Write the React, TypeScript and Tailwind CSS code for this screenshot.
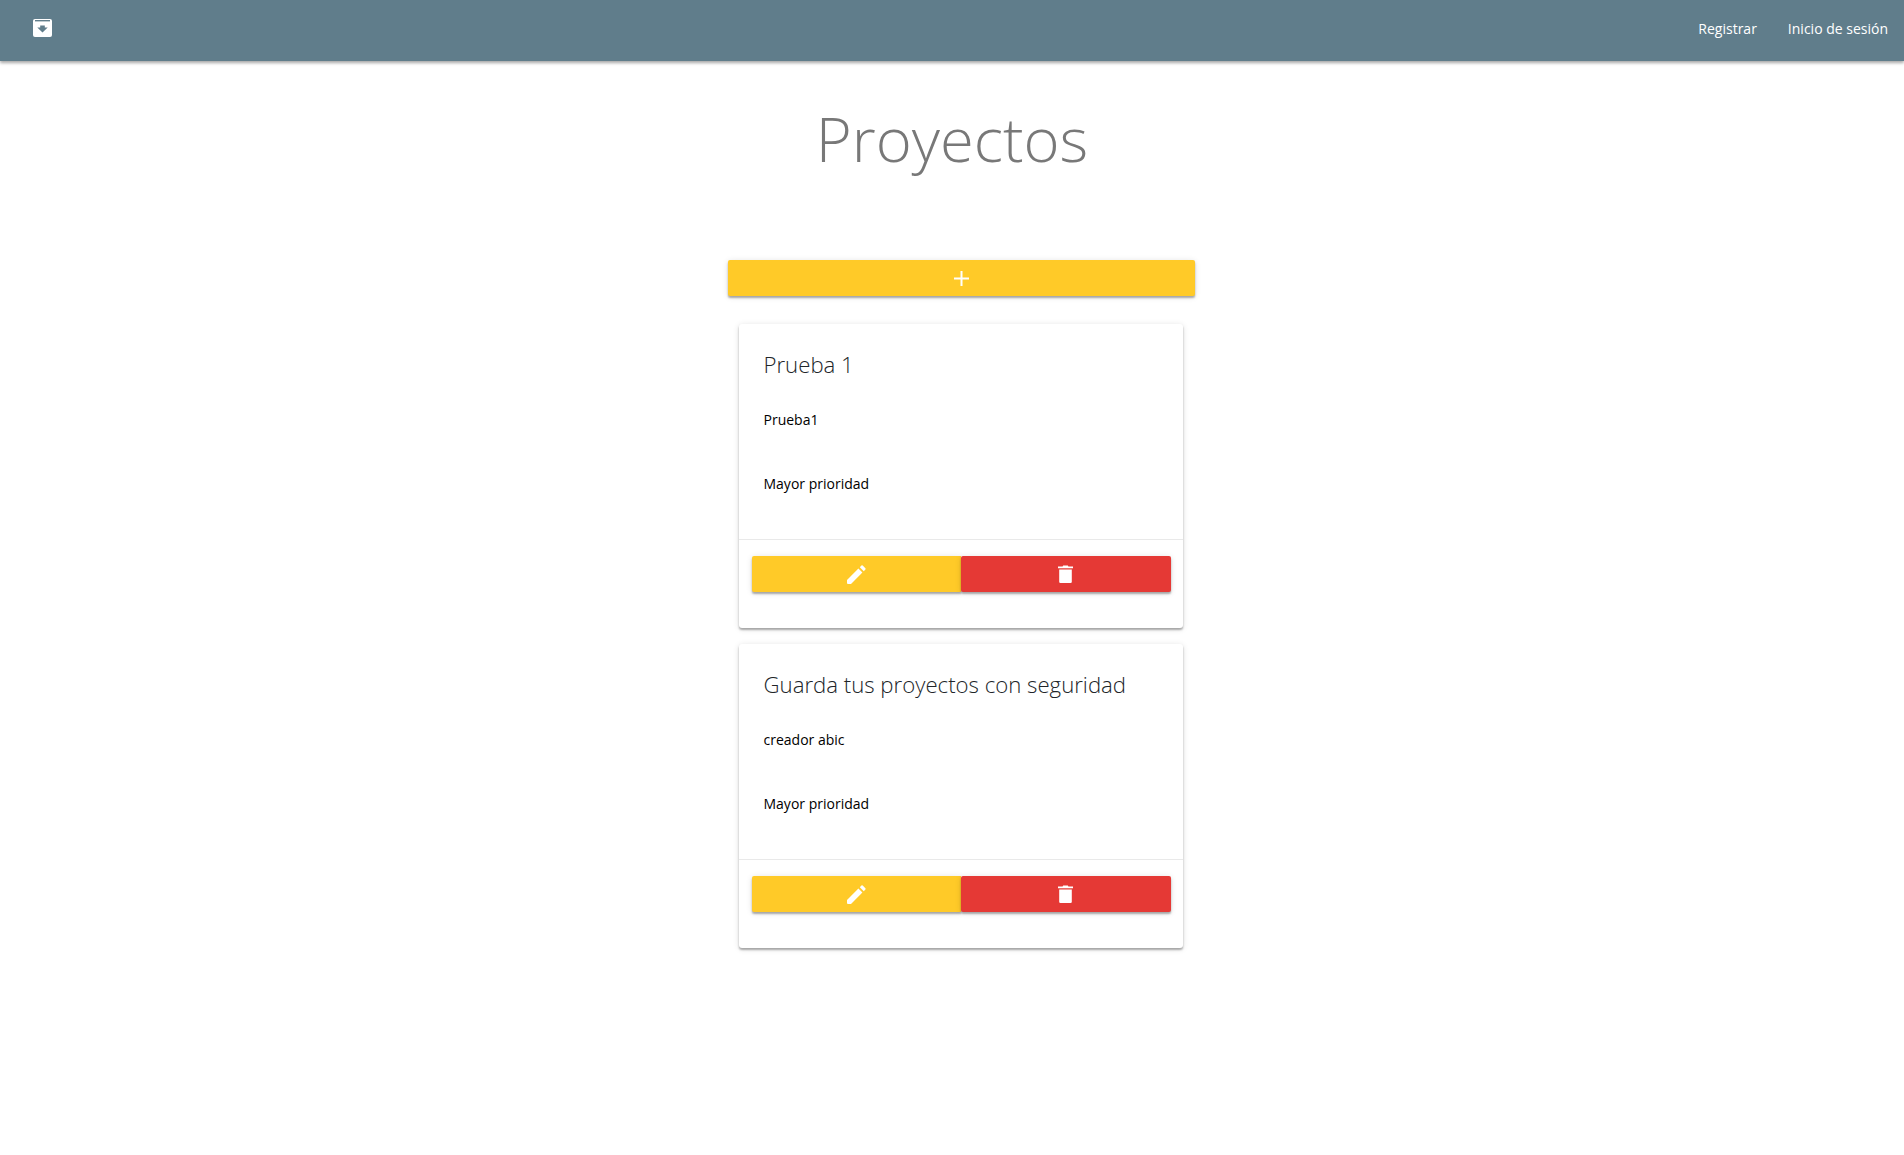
import React from 'react';

const projects = [
  { id: 1, title: 'Prueba 1', description: 'Prueba1', priority: 'Mayor prioridad' },
  { id: 2, title: 'Guarda tus proyectos con seguridad', description: 'creador abic', priority: 'Mayor prioridad' },
];

const raised = 'shadow-[0_2px_2px_0_rgba(0,0,0,0.3),0_1px_6px_0_rgba(0,0,0,0.12)]';

function Logo() {
  return (
    <svg width="19" height="18" viewBox="0 0 19 18" aria-hidden="true">
      <rect width="19" height="18" rx="2" fill="#fff" />
      <rect x="2" y="1" width="15" height="1.4" fill="#607d8b" />
      <path d="M4.3 8.6H7.2V6.6H11.8V8.6H14.7L9.5 13.4Z" fill="#607d8b" />
    </svg>
  );
}

function PlusIcon() {
  return (
    <svg width="15" height="15" viewBox="0 0 15 15" aria-hidden="true">
      <path d="M6.5 0H8.5V6.5H15V8.5H8.5V15H6.5V8.5H0V6.5H6.5Z" fill="#fff" />
    </svg>
  );
}

function PencilIcon() {
  return (
    <svg width="19" height="19" viewBox="0 0 19 19" aria-hidden="true">
      <path d="M0 15L11.4 3.6L15.4 7.6L4 19H1Q0 19 0 18Z" fill="#fff" />
      <path d="M12.8 2.2L14.4 0.6Q15 0 15.7 0.6L18.4 3.3Q19 4 18.4 4.6L16.8 6.2Z" fill="#fff" />
    </svg>
  );
}

function TrashIcon() {
  return (
    <svg width="15" height="18" viewBox="0 0 15 18" aria-hidden="true">
      <path d="M0 1.6H4.6L5.2 0.4H9.8L10.4 1.6H15V3.2H0Z" fill="#fff" />
      <path d="M1.2 4.6H13.8V16.8Q13.8 18 12.6 18H2.4Q1.2 18 1.2 16.8Z" fill="#fff" />
    </svg>
  );
}

function ProjectCard({ title, description, priority }: { title: string; description: string; priority: string }) {
  return (
    <div className={`h-[304px] w-[444px] rounded-[3px] bg-white ${raised}`}>
      <div className="h-[216px] border-b border-[#e9e9e9] px-[25px] pt-[25px]">
        <h4 className="text-[22.2px] leading-[32px] font-light text-[#212529]">{title}</h4>
        <p className="mt-[28px] text-[14px] leading-[21px] text-black">{description}</p>
        <p className="mt-[43px] text-[14px] leading-[21px] text-black">{priority}</p>
      </div>
      <div className="flex pt-[16px] pr-[12px] pl-[13px]">
        <button className={`flex h-[36px] w-[209px] items-center justify-center rounded-l-[2px] bg-[#ffca28] ${raised}`}>
          <PencilIcon />
        </button>
        <button className={`flex h-[36px] w-[210px] items-center justify-center rounded-[2px] bg-[#e53935] ${raised}`}>
          <TrashIcon />
        </button>
      </div>
    </div>
  );
}

export default function App() {
  return (
    <div className="min-h-[1155px] bg-white font-['Open_Sans','Noto_Sans',sans-serif]">
      <nav className="flex h-[61px] items-start justify-between bg-[#607d8b] pt-[19px] pr-[16px] pl-[33px] shadow-[0_2px_3px_0_rgba(0,0,0,0.35)]">
        <Logo />
        <div className="flex gap-[31px] text-[14px] leading-[19px] text-white">
          <a href="#">Registrar</a>
          <a href="#">Inicio de sesión</a>
        </div>
      </nav>

      <h1 className="mt-[38px] text-center text-[61.5px] leading-[78px] font-light text-[#787878]">Proyectos</h1>

      <div className="mt-[83px] flex flex-col items-center pl-[19px]">
        <button className={`flex h-[36px] w-[467px] items-center justify-center rounded-[2px] bg-[#ffca28] ${raised}`}>
          <PlusIcon />
        </button>
        <div className="mt-[28px] flex flex-col gap-[16px] pr-[2px]">
          {projects.map(project => (
            <ProjectCard key={project.id} title={project.title} description={project.description} priority={project.priority} />
          ))}
        </div>
      </div>
    </div>
  );
}
